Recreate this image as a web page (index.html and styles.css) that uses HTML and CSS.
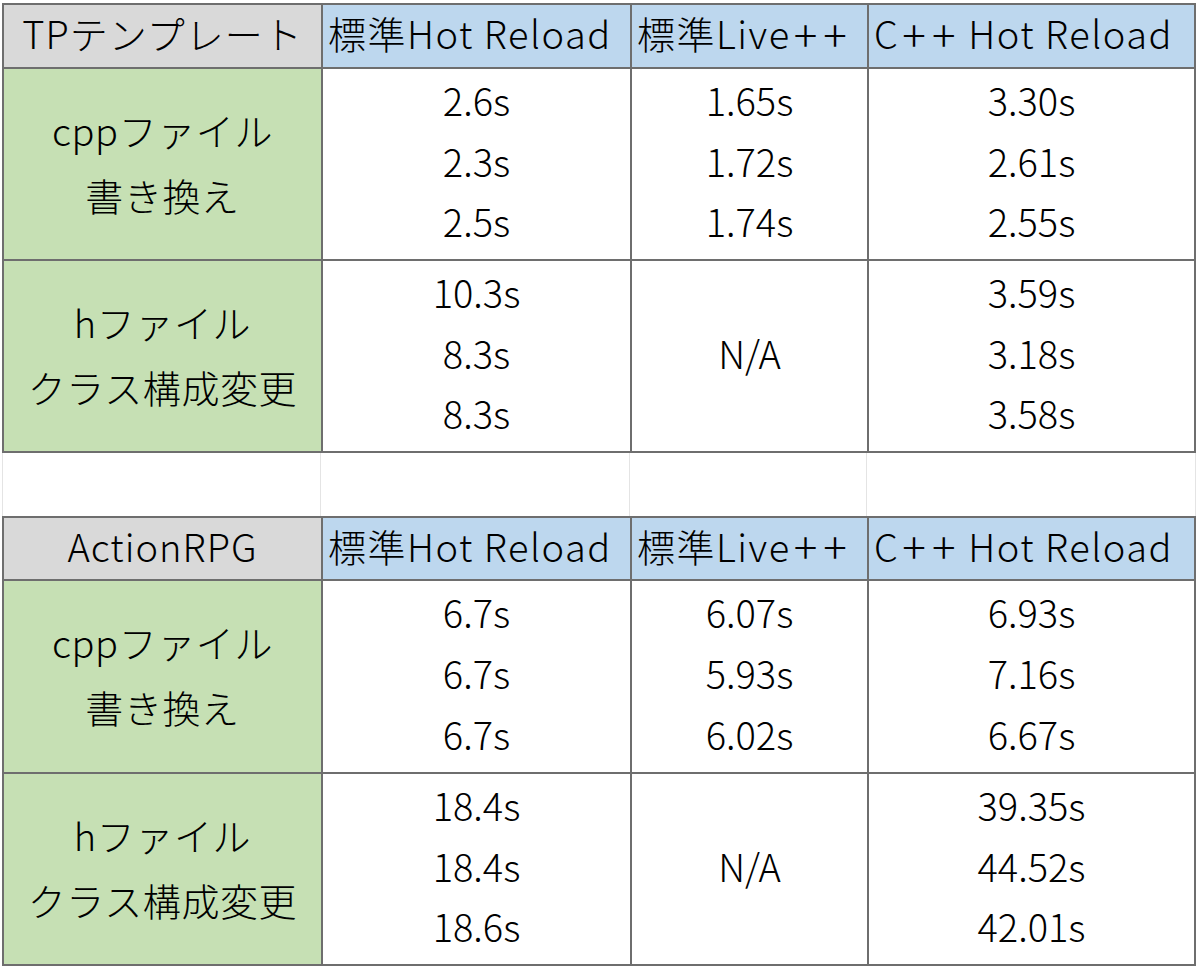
FILE: index.html
```html
<!DOCTYPE html>
<html lang="ja">
<head>
<meta charset="utf-8">
<title>Hot Reload 比較</title>
<link rel="stylesheet" href="styles.css">
</head>
<body>
<div class="sheet">
  <div class="table t1">
    <div class="cell corner">TPテンプレート</div>
    <div class="cell head">標準Hot Reload</div>
    <div class="cell head">標準Live<span class="plus">+</span><span class="plus">+</span></div>
    <div class="cell head">C<span class="plus">+</span><span class="plus">+</span> Hot Reload</div>

    <div class="cell label"><span>cppファイル</span><span>書き換え</span></div>
    <div class="cell vals"><span>2.6s</span><span>2.3s</span><span>2.5s</span></div>
    <div class="cell vals"><span>1.65s</span><span>1.72s</span><span>1.74s</span></div>
    <div class="cell vals"><span>3.30s</span><span>2.61s</span><span>2.55s</span></div>

    <div class="cell label"><span>hファイル</span><span>クラス構成変更</span></div>
    <div class="cell vals"><span>10.3s</span><span>8.3s</span><span>8.3s</span></div>
    <div class="cell vals single"><span>N/A</span></div>
    <div class="cell vals"><span>3.59s</span><span>3.18s</span><span>3.58s</span></div>
  </div>

  <div class="spacer">
    <div class="gap-col"></div>
    <div class="gap-col"></div>
    <div class="gap-col"></div>
    <div class="gap-col"></div>
  </div>

  <div class="table t2">
    <div class="cell corner">ActionRPG</div>
    <div class="cell head">標準Hot Reload</div>
    <div class="cell head">標準Live<span class="plus">+</span><span class="plus">+</span></div>
    <div class="cell head">C<span class="plus">+</span><span class="plus">+</span> Hot Reload</div>

    <div class="cell label"><span>cppファイル</span><span>書き換え</span></div>
    <div class="cell vals"><span>6.7s</span><span>6.7s</span><span>6.7s</span></div>
    <div class="cell vals"><span>6.07s</span><span>5.93s</span><span>6.02s</span></div>
    <div class="cell vals"><span>6.93s</span><span>7.16s</span><span>6.67s</span></div>

    <div class="cell label"><span>hファイル</span><span>クラス構成変更</span></div>
    <div class="cell vals"><span>18.4s</span><span>18.4s</span><span>18.6s</span></div>
    <div class="cell vals single"><span>N/A</span></div>
    <div class="cell vals"><span>39.35s</span><span>44.52s</span><span>42.01s</span></div>
  </div>
</div>
</body>
</html>
```

FILE: styles.css
```css
html, body {
  margin: 0;
  padding: 0;
  background: #ffffff;
}

body {
  font-family: "Noto Sans CJK JP", "Noto Sans", sans-serif;
  font-weight: 300;
  font-size: 38px;
  color: #000000;
}

.sheet {
  padding: 3px 0 0 2px;
  width: 1194px;
}

.table {
  display: grid;
  grid-template-columns: 317px 307px 235px 325px;
  gap: 2px;
  padding: 2px;
  background: #6e6e6e;
}

.t1 {
  grid-template-rows: 62px 190px 190px;
}

.t2 {
  grid-template-rows: 61px 191px 190px;
}

.cell {
  background: #ffffff;
  display: flex;
  align-items: center;
  white-space: pre;
  min-width: 0;
}

.corner {
  background: #d9d9d9;
  justify-content: center;
  letter-spacing: 1px;
  padding-bottom: 7px;
}

.head {
  background: #bdd7ee;
  justify-content: flex-start;
  padding-left: 5px;
  padding-bottom: 7px;
  letter-spacing: 1.5px;
}

.plus {
  font-size: 44px;
  line-height: 38px;
  margin: 0 3px;
  letter-spacing: 0;
  vertical-align: -1px;
}

.label {
  background: #c6e0b4;
  flex-direction: column;
  justify-content: center;
  line-height: 65px;
  letter-spacing: 0.6px;
  padding-bottom: 5px;
}

.vals {
  flex-direction: column;
  align-items: stretch;
  padding-bottom: 8px;
}

.vals span {
  flex: 1;
  display: flex;
  align-items: center;
  justify-content: center;
}

.spacer {
  display: grid;
  grid-template-columns: 319px 309px 237px 329px;
  height: 63px;
}

.gap-col {
  border-right: 1px solid #e4e4e4;
}

.gap-col:first-child {
  border-left: 1px solid #e4e4e4;
}
```
